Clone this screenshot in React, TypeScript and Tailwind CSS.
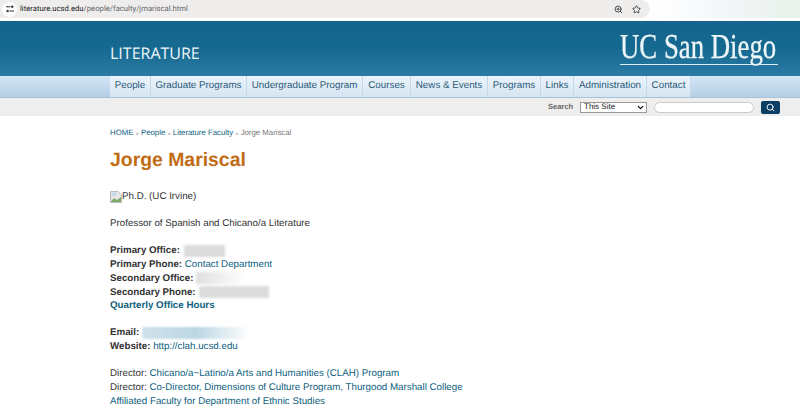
import { Search, Star, ZoomIn, ChevronDown } from 'lucide-react';

const navItems = [
    { label: 'People', width: 'w-[41px]' },
    { label: 'Graduate Programs', width: 'w-[96px]' },
    { label: 'Undergraduate Program', width: 'w-[116px]' },
    { label: 'Courses', width: 'w-[48px]' },
    { label: 'News & Events', width: 'w-[77px]' },
    { label: 'Programs', width: 'w-[53px]' },
    { label: 'Links', width: 'w-[33px]' },
    { label: 'Administration', width: 'w-[73px]' },
    { label: 'Contact', width: 'w-[44px]' },
];

function BrowserBar() {
    return (
        <div className="flex h-[21px] bg-white pb-[3px]">
            <div className="flex w-[650px] items-center justify-between rounded-r-[9px] bg-[#efedec] pr-[6px] pl-[2px]">
                <div className="flex items-center gap-[3px]">
                    <div className="flex h-[15px] w-[15px] items-center justify-center rounded-full bg-white">
                        <svg viewBox="0 0 10 10" className="h-[8px] w-[8px]" fill="#444">
                            <rect x="0" y="1.5" width="5.5" height="1.4" />
                            <circle cx="7.8" cy="2.2" r="1.6" />
                            <circle cx="2" cy="7.5" r="1.6" />
                            <rect x="4.5" y="6.8" width="5.5" height="1.4" />
                        </svg>
                    </div>
                    <span className="font-['Roboto',sans-serif] text-[7.7px] text-[#5f6368]">
                        <span className="text-[#202124]">literature.ucsd.edu</span>
                        /people/faculty/jmariscal.html
                    </span>
                </div>
                <div className="flex items-center gap-[9px] pr-[3px] text-[#444]">
                    <ZoomIn className="h-[9px] w-[9px]" strokeWidth={2.5} />
                    <Star className="h-[9px] w-[9px]" strokeWidth={2.5} />
                </div>
            </div>
            <div className="flex-1 bg-gradient-to-r from-white via-[#f3f6f9] to-[#e9f1ea]" />
        </div>
    );
}

function Logo() {
    return (
        <div className="flex w-[158px] flex-col">
            <span className="h-[29px] origin-left scale-x-[0.765] font-['Liberation_Serif',serif] text-[35px] leading-[29px] whitespace-nowrap text-[#eef5f8] [-webkit-text-stroke:0.3px_#eef5f8]">
                UC San Diego
            </span>
            <div className="mt-[3px] h-px bg-[#dcecf3]" />
        </div>
    );
}

function Banner() {
    return (
        <div className="flex h-[55px] items-start justify-between bg-gradient-to-b from-[#14648f] via-[#15698f] to-[#2a7ba6] pt-[11px] pr-[22px] pl-[110px]">
            <span className="mt-[11px] font-['Open_Sans',sans-serif] text-[16px] leading-[20px] text-[#eef6fa]">
                LITERATURE
            </span>
            <Logo />
        </div>
    );
}

function NavBar() {
    return (
        <div className="flex h-[22px] border-b border-[#a9c3d6] bg-gradient-to-b from-[#d5e6f5] to-[#b3cfe6] pl-[110px]">
            {navItems.map((item) => (
                <div
                    key={item.label}
                    className={`flex shrink-0 items-center justify-center border-r border-[#c3d8e8] bg-gradient-to-b from-[#ecf4fb] to-[#d6e5f2] font-['Liberation_Sans',sans-serif] text-[9.8px] whitespace-nowrap text-[#2a5a78] ${item.width}`}
                >
                    {item.label}
                </div>
            ))}
        </div>
    );
}

function SearchBar() {
    return (
        <div className="flex h-[18px] items-center justify-end bg-[#efeeee] pr-[20px] font-['Liberation_Sans',sans-serif]">
            <span className="mr-[7px] text-[7.5px] font-bold text-[#666]">Search</span>
            <div className="mr-[7px] flex h-[11px] w-[67px] items-center justify-between border border-[#999] bg-white pr-[1px] pl-[3px] text-[8px] text-[#222]">
                This Site
                <ChevronDown className="h-[9px] w-[9px] text-black" strokeWidth={3} />
            </div>
            <div className="mr-[7px] h-[11px] w-[100px] rounded-full border border-[#ccc] bg-white" />
            <div className="flex h-[13px] w-[19px] items-center justify-center rounded-[2px] bg-[#0b3f66]">
                <Search className="h-[9px] w-[9px] text-white" strokeWidth={2.5} />
            </div>
        </div>
    );
}

function BrokenImage() {
    return (
        <svg viewBox="0 0 12 12" className="h-[12px] w-[12px] shrink-0">
            <path d="M0.5 0.5 H8 L11.5 4 V11.5 H0.5 Z" fill="#e8e8e8" stroke="#bbb" />
            <path d="M1 10.5 L4 7 L7 9 L11 6 V11 H1 Z" fill="#7fae68" />
            <path d="M1.5 1.5 H6 V5 H1.5 Z" fill="#c4d8ee" />
        </svg>
    );
}

function Blur({ className }: { className: string }) {
    return <span className={`inline-block h-[12px] align-middle blur-[1px] ${className}`} />;
}

function Content() {
    const link = 'text-[#0f5f80]';
    const sep = 'mx-[1px] text-[5px]';
    return (
        <main className="pl-[110px] font-['Liberation_Sans',sans-serif] text-[9.75px] leading-[13.7px] text-[#333]">
            <div className="mt-[11px] text-[7.8px] leading-[12px] text-[#777]">
                <span className={link}>HOME</span>
                <span className={sep}> » </span>
                <span className={link}>People</span>
                <span className={sep}> » </span>
                <span className={link}>Literature Faculty</span>
                <span className={sep}> » </span>
                Jorge Mariscal
            </div>
            <h1 className="mt-[8px] text-[19.4px] leading-[24px] font-bold text-[#c06c14]">
                Jorge Mariscal
            </h1>
            <p className="mt-[18px] flex items-center">
                <BrokenImage />
                Ph.D. (UC Irvine)
            </p>
            <p className="mt-[13.5px]">Professor of Spanish and Chicano/a Literature</p>
            <div className="mt-[13.5px]">
                <div>
                    <b>Primary Office:</b> <Blur className="ml-px w-[41px] bg-[#dcdcdc]" />
                </div>
                <div>
                    <b>Primary Phone:</b> <span className={link}>Contact Department</span>
                </div>
                <div>
                    <b>Secondary Office:</b>{' '}
                    <Blur className="w-[50px] bg-gradient-to-r from-[#e0e0e0] to-white" />
                </div>
                <div>
                    <b>Secondary Phone:</b> <Blur className="ml-[1px] w-[70px] bg-[#dcdcdc]" />
                </div>
                <div className={`font-bold ${link}`}>Quarterly Office Hours</div>
            </div>
            <div className="mt-[13.5px]">
                <div>
                    <b>Email:</b>{' '}
                    <Blur className="w-[108px] bg-gradient-to-r from-[#cfe2ec] via-[#bcd6e3] to-white" />
                </div>
                <div>
                    <b>Website:</b> <span className={link}>http://clah.ucsd.edu</span>
                </div>
            </div>
            <div className="mt-[13.5px]">
                <div>
                    Director: <span className={link}>Chicano/a~Latino/a Arts and Humanities (CLAH) Program</span>
                </div>
                <div>
                    Director:{' '}
                    <span className={link}>
                        Co-Director, Dimensions of Culture Program, Thurgood Marshall College
                    </span>
                </div>
                <div className={link}>Affiliated Faculty for Department of Ethnic Studies</div>
            </div>
        </main>
    );
}

export default function App() {
    return (
        <div className="h-[409px] w-[800px] overflow-hidden bg-white [text-rendering:geometricPrecision]">
            <BrowserBar />
            <Banner />
            <NavBar />
            <SearchBar />
            <Content />
        </div>
    );
}
